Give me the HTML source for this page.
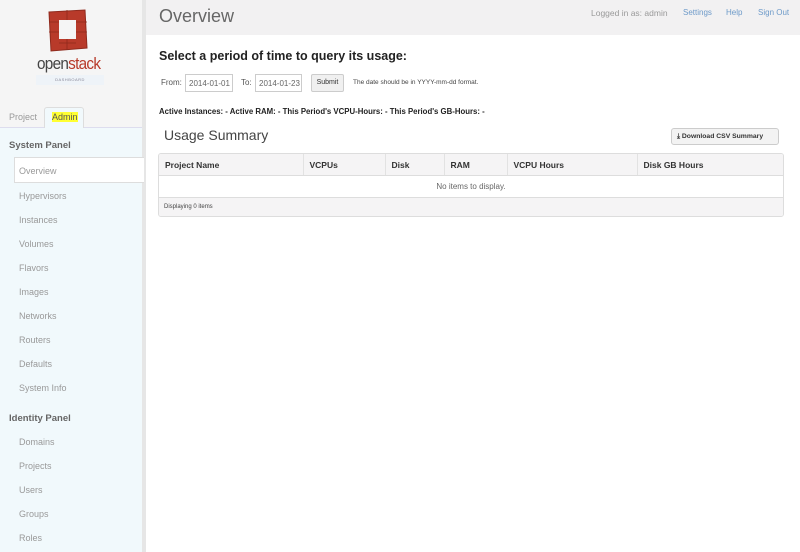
<!DOCTYPE html>
<html><head><style>
*{margin:0;padding:0;box-sizing:border-box}
body{width:800px;height:552px;overflow:hidden;font-family:"Liberation Sans",sans-serif;background:#fff;position:relative}
.side{position:absolute;left:0;top:0;width:142px;height:552px;background:#f5f5f5}
.sb{position:absolute;left:142px;top:0;width:4px;height:552px;background:#e6e6e6}
.panel{position:absolute;left:0;top:127px;width:142px;height:425px;background:#f1f9fc;border-top:1px solid #dde}
.t{position:absolute;white-space:nowrap}
.nav{position:absolute;left:19px;font-size:9px;color:#999}
.hdr{position:absolute;left:146px;top:0;width:654px;height:35px;background:#f2f1f2}
th{font-size:8.5px;font-weight:bold;color:#333;text-align:left;padding:0 6px;height:21px;border-right:1px solid #e2e2e2;background:#f5f4f5}
</style></head><body>
<div class="side"></div>
<div class="panel"></div>
<div class="sb"></div>
<svg class="t" style="left:45px;top:8px" width="44" height="45" viewBox="0 0 44 45">
<path d="M4 4 L40 2 L42 40 L6 43 Z" fill="#b83a2a"/>
<path d="M4 4 L40 2 L42 40 L6 43 Z" fill="none" stroke="#8f2a1d" stroke-width="1"/>
<rect x="14" y="12" width="17" height="19" fill="#f5f5f5"/>
<path d="M4 14h10M4 24h10M31 14h11M31 24h11M14 35h17M22 2v10M22 31v11" stroke="#8f2a1d" stroke-width=".8"/>
</svg>
<div class="t" style="left:37px;top:54px;font-size:17px;color:#444;letter-spacing:-.8px;transform:scaleX(.9);transform-origin:left">open<span style="color:#b83a2a">stack</span></div>
<div class="t" style="left:36px;top:75px;width:68px;height:10px;background:#eef3f8;font-size:4px;color:#889;text-align:center;line-height:10px;letter-spacing:.5px">DASHBOARD</div>
<div class="t" style="left:9px;top:112px;font-size:9px;color:#999">Project</div>
<div class="t" style="left:44px;top:107px;width:40px;height:21px;background:#f1f9fc;border:1px solid #ddd;border-bottom:none;border-radius:3px 3px 0 0"></div>
<div class="t" style="left:52px;top:112px;font-size:9px;color:#555;background:#ffff33">Admin</div>
<div class="t" style="left:9px;top:140px;font-size:9.5px;font-weight:bold;color:#666">System Panel</div>
<div class="t" style="left:14px;top:157px;width:130px;height:26px;background:#fff;border:1px solid #ddd;border-right:none"></div>
<div class="nav" style="top:166px">Overview</div>
<div class="nav" style="top:191px">Hypervisors</div>
<div class="nav" style="top:215px">Instances</div>
<div class="nav" style="top:239px">Volumes</div>
<div class="nav" style="top:263px">Flavors</div>
<div class="nav" style="top:287px">Images</div>
<div class="nav" style="top:311px">Networks</div>
<div class="nav" style="top:335px">Routers</div>
<div class="nav" style="top:359px">Defaults</div>
<div class="nav" style="top:383px">System Info</div>
<div class="t" style="left:9px;top:413px;font-size:9.5px;font-weight:bold;color:#666">Identity Panel</div>
<div class="nav" style="top:437px">Domains</div>
<div class="nav" style="top:461px">Projects</div>
<div class="nav" style="top:485px">Users</div>
<div class="nav" style="top:509px">Groups</div>
<div class="nav" style="top:533px">Roles</div>

<div class="hdr"></div>
<div class="t" style="left:159px;top:6px;font-size:18px;color:#666">Overview</div>
<div class="t" style="left:591px;top:8px;font-size:8.5px;color:#999">Logged in as: admin</div>
<div class="t" style="left:683px;top:8px;font-size:8px;color:#6d9ac9">Settings</div>
<div class="t" style="left:726px;top:8px;font-size:8px;color:#6d9ac9">Help</div>
<div class="t" style="left:758px;top:8px;font-size:8px;color:#6d9ac9">Sign Out</div>

<div class="t" style="left:159px;top:49px;font-size:12.5px;font-weight:bold;color:#222">Select a period of time to query its usage:</div>
<div class="t" style="left:161px;top:78px;font-size:8px;color:#555">From:</div>
<div class="t" style="left:185px;top:74px;width:48px;height:18px;border:1px solid #ccc;font-size:8px;color:#666;padding:3px 3px;line-height:11px">2014-01-01</div>
<div class="t" style="left:241px;top:78px;font-size:8px;color:#555">To:</div>
<div class="t" style="left:255px;top:74px;width:47px;height:18px;border:1px solid #ccc;font-size:8px;color:#666;padding:3px 3px;line-height:11px">2014-01-23</div>
<div class="t" style="left:311px;top:74px;width:33px;height:18px;border:1px solid #ccc;border-radius:2px;background:#f0f0f0;font-size:7px;color:#333;text-align:center;line-height:16px">Submit</div>
<div class="t" style="left:353px;top:79px;font-size:6.5px;color:#444">The date should be in YYYY-mm-dd format.</div>
<div class="t" style="left:159px;top:107px;font-size:7.8px;font-weight:bold;color:#222">Active Instances: - Active RAM: - This Period's VCPU-Hours: - This Period's GB-Hours: -</div>
<div class="t" style="left:164px;top:127px;font-size:14px;color:#444">Usage Summary</div>
<div class="t" style="left:671px;top:128px;width:108px;height:17px;border:1px solid #ccc;border-radius:3px;background:#f3f3f3;font-size:6.8px;font-weight:bold;color:#333;line-height:15px;padding-left:5px">&#x2913; Download CSV Summary</div>
<div class="t" style="left:158px;top:153px;width:626px;height:64px;border:1px solid #ddd;border-radius:3px;overflow:hidden">
<table style="border-collapse:collapse;width:100%">
<tr><th style="width:144px">Project Name</th><th style="width:82px">VCPUs</th><th style="width:59px">Disk</th><th style="width:63px">RAM</th><th style="width:130px">VCPU Hours</th><th style="border-right:none">Disk GB Hours</th></tr>
</table>
<div style="border-top:1px solid #ddd;height:22px;font-size:8px;color:#666;text-align:center;line-height:21px">No items to display.</div>
<div style="border-top:1px solid #ddd;height:20px;background:#f5f4f5;font-size:6px;color:#444;padding-left:5px;line-height:19px">Displaying 0 items</div>
</div>
</body></html>
